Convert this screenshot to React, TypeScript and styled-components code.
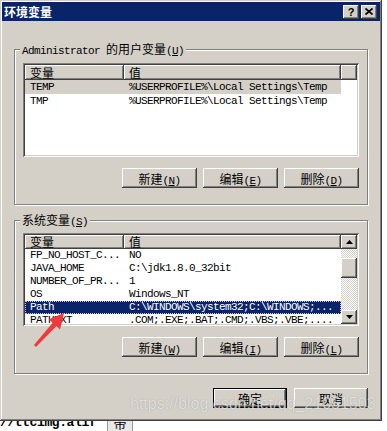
import React from "react";
import styled, { createGlobalStyle, css } from "styled-components";

const GlobalStyle = createGlobalStyle`
  body {
    margin: 0;
    background: #fff;
  }
  * {
    box-sizing: border-box;
  }
`;

const raised = css`
  background: #d4d0c8;
  box-shadow: inset -1px -1px #404040, inset 1px 1px #fff, inset -2px -2px #808080,
    inset 2px 2px #d4d0c8;
`;

const Page = styled.div`
  position: relative;
  width: 387px;
  height: 431px;
  overflow: hidden;
`;

const Window = styled.div`
  width: 382px;
  height: 421px;
  padding: 2px;
  background: #d4d0c8;
  box-shadow: inset -1px -1px #404040, inset 1px 1px #d4d0c8, inset -2px -2px #808080,
    inset 2px 2px #fff;
  display: flex;
  flex-direction: column;
  font-family: "Noto Sans CJK SC", sans-serif;
  font-size: 12px;
  color: #000;
`;

const TitleBar = styled.div`
  height: 19px;
  flex-shrink: 0;
  display: flex;
  align-items: center;
  padding: 0 3px 0 2px;
  background: #0a246a;
  color: #fff;
`;

const Title = styled.div`
  flex: 1;
  font-weight: bold;
  font-size: 12px;
  line-height: 19px;
`;

const CaptionButton = styled.div`
  ${raised};
  width: 16px;
  height: 14px;
  margin-left: 2px;
  display: flex;
  align-items: center;
  justify-content: center;
  font-family: "Liberation Sans", sans-serif;
  font-weight: bold;
  font-size: 11px;
  color: #000;
  line-height: 14px;
`;

const Content = styled.div`
  flex: 1;
  display: flex;
  flex-direction: column;
  padding: 21px 12px 0;
`;

const Group = styled.fieldset<{ $top: number; $padTop: number }>`
  margin: ${(p) => p.$top}px 0 0;
  padding: ${(p) => p.$padTop}px 8px 16px;
  min-width: 0;
  border: 1px solid #808080;
  box-shadow: 1px 1px 0 #fff, inset 1px 1px 0 #fff;
`;

const Legend = styled.legend`
  margin-left: -3px;
  padding: 0 2px;
  height: 14px;
  line-height: 14px;
  background: #d4d0c8;
  white-space: nowrap;
`;

const Mono = styled.span`
  font-family: "Liberation Mono", monospace;
  font-size: 11px;
  letter-spacing: -0.6px;
`;

const ListBox = styled.div<{ $h: number }>`
  height: ${(p) => p.$h}px;
  padding: 2px;
  background: #fff;
  box-shadow: inset 1px 1px #808080, inset -1px -1px #fff, inset 2px 2px #404040,
    inset -2px -2px #d4d0c8;
  display: flex;
  overflow: hidden;
`;

const ListMain = styled.div`
  flex: 1;
  display: flex;
  flex-direction: column;
  overflow: hidden;
`;

const HeaderRow = styled.div<{ $h: number }>`
  display: flex;
  height: ${(p) => p.$h}px;
  flex-shrink: 0;
`;

const HeaderCell = styled.div<{ $w?: number }>`
  ${raised};
  ${(p) => (p.$w ? `width: ${p.$w}px;` : "flex: 1;")}
  height: 100%;
  padding-left: 5px;
  display: flex;
  align-items: center;
  font-size: 12px;
  line-height: 12px;
`;

const Row = styled.div<{ $h: number; $sel?: "focus" | "blur" }>`
  display: flex;
  width: 316px;
  height: ${(p) => p.$h}px;
  line-height: ${(p) => p.$h}px;
  flex-shrink: 0;
  font-family: "Liberation Mono", monospace;
  font-size: 11px;
  letter-spacing: -0.6px;
  ${(p) =>
    p.$sel === "blur" &&
    css`
      background: #d4d0c8;
    `}
  ${(p) =>
    p.$sel === "focus" &&
    css`
      background: #0a246a;
      color: #fff;
      outline: 1px dotted #e8c860;
      outline-offset: -1px;
    `}
`;

const Cell = styled.div<{ $w: number }>`
  width: ${(p) => p.$w}px;
  padding-left: 5px;
  white-space: nowrap;
  overflow: hidden;
`;

const ScrollBar = styled.div`
  width: 16px;
  display: flex;
  flex-direction: column;
`;

const ScrollButton = styled.div`
  ${raised};
  height: 14px;
  flex-shrink: 0;
  display: flex;
  align-items: center;
  justify-content: center;
`;

const Track = styled.div`
  flex: 1;
  background-color: #d4d0c8;
  background-image: repeating-conic-gradient(#fff 0 25%, #d4d0c8 0 50%);
  background-size: 2px 2px;
`;

const Thumb = styled.div`
  ${raised};
  height: 20px;
  margin-top: 9px;
`;

const ButtonRow = styled.div<{ $top: number; $gap: number }>`
  display: flex;
  justify-content: flex-end;
  gap: ${(p) => p.$gap}px;
  margin-top: ${(p) => p.$top}px;
`;

const Button = styled.button<{ $default?: boolean; $w?: number }>`
  width: ${(p) => p.$w ?? 75}px;
  height: 20px;
  padding: 0;
  border: none;
  font-family: "Noto Sans CJK SC", sans-serif;
  font-size: 12px;
  color: #000;
  ${raised};
  ${(p) =>
    p.$default &&
    css`
      box-shadow: inset 0 0 0 1px #000, inset -2px -2px #404040, inset 2px 2px #fff,
        inset -3px -3px #808080;
    `}
`;

const Footer = styled.div`
  display: flex;
  justify-content: flex-end;
  gap: 7px;
  margin-top: 14px;
`;

const Strip = styled.div`
  height: 10px;
  display: flex;
  overflow: hidden;
  background: #fff;
  font-family: "Liberation Mono", monospace;
  font-weight: bold;
  font-size: 13px;
  line-height: 14px;
`;

const StripText = styled.div`
  width: 107px;
  margin-top: -5px;
  letter-spacing: -0.4px;
`;

const StripTag = styled.div`
  width: 26px;
  margin-top: -5px;
  background: #e8e8e8;
  border-left: 1px solid #999;
  border-right: 1px solid #999;
  text-align: center;
  font-family: "Noto Sans CJK SC", sans-serif;
  font-weight: normal;
`;

const Watermark = styled.div`
  position: absolute;
  left: 130px;
  top: 395px;
  font-family: "Liberation Sans", sans-serif;
  font-size: 16px;
  line-height: 18px;
  color: rgba(255, 255, 255, 0.72);
  text-shadow: 0 0 1px rgba(0, 0, 0, 0.35);
  white-space: nowrap;
  pointer-events: none;
`;

const Overlay = styled.svg`
  position: absolute;
  left: 0;
  top: 0;
  pointer-events: none;
`;

const Arrow = ({ up }: { up?: boolean }) => (
  <svg width="7" height="4" viewBox="0 0 7 4">
    <path d={up ? "M3.5 0 L7 4 L0 4 Z" : "M0 0 L7 0 L3.5 4 Z"} fill="#000" />
  </svg>
);

const Key = ({ k }: { k: string }) => (
  <Mono>
    (<u>{k}</u>)
  </Mono>
);

const userVars = [
  ["TEMP", "%USERPROFILE%\\Local Settings\\Temp"],
  ["TMP", "%USERPROFILE%\\Local Settings\\Temp"],
];

const sysVars = [
  ["FP_NO_HOST_C...", "NO"],
  ["JAVA_HOME", "C:\\jdk1.8.0_32bit"],
  ["NUMBER_OF_PR...", "1"],
  ["OS", "Windows_NT"],
  ["Path", "C:\\WINDOWS\\system32;C:\\WINDOWS;..."],
  ["PATHEXT", ".COM;.EXE;.BAT;.CMD;.VBS;.VBE;...."],
];

const App: React.FC = () => {
  return (
    <Page>
      <GlobalStyle />
      <Window>
        <TitleBar>
          <Title>环境变量</Title>
          <CaptionButton>?</CaptionButton>
          <CaptionButton>
            <svg width="8" height="7" viewBox="0 0 8 7">
              <path d="M0.5 0.5 L7.5 6.5 M7.5 0.5 L0.5 6.5" stroke="#000" strokeWidth="1.7" />
            </svg>
          </CaptionButton>
        </TitleBar>

        <Content>
          <Group $top={0} $padTop={7}>
            <Legend>
              <Mono>Administrator </Mono>的用户变量<Key k="U" />
            </Legend>
            <ListBox $h={94}>
              <ListMain>
                <HeaderRow $h={15}>
                  <HeaderCell $w={99}>变量</HeaderCell>
                  <HeaderCell $w={217}>值</HeaderCell>
                  <HeaderCell />
                </HeaderRow>
                {userVars.map(([name, value], i) => (
                  <Row key={name} $h={14} $sel={i === 0 ? "blur" : undefined}>
                    <Cell $w={99}>{name}</Cell>
                    <Cell $w={217}>{value}</Cell>
                  </Row>
                ))}
              </ListMain>
            </ListBox>
            <ButtonRow $top={11} $gap={6}>
              <Button>
                新建<Key k="N" />
              </Button>
              <Button>
                编辑<Key k="E" />
              </Button>
              <Button>
                删除<Key k="D" />
              </Button>
            </ButtonRow>
          </Group>

          <Group $top={8} $padTop={6}>
            <Legend>
              系统变量<Key k="S" />
            </Legend>
            <ListBox $h={93}>
              <ListMain>
                <HeaderRow $h={14}>
                  <HeaderCell $w={99}>变量</HeaderCell>
                  <HeaderCell $w={217}>值</HeaderCell>
                </HeaderRow>
                {sysVars.map(([name, value]) => (
                  <Row key={name} $h={13} $sel={name === "Path" ? "focus" : undefined}>
                    <Cell $w={99}>{name}</Cell>
                    <Cell $w={217}>{value}</Cell>
                  </Row>
                ))}
              </ListMain>
              <ScrollBar>
                <ScrollButton>
                  <Arrow up />
                </ScrollButton>
                <Track>
                  <Thumb />
                </Track>
                <ScrollButton>
                  <Arrow />
                </ScrollButton>
              </ScrollBar>
            </ListBox>
            <ButtonRow $top={11} $gap={6}>
              <Button>
                新建<Key k="W" />
              </Button>
              <Button>
                编辑<Key k="I" />
              </Button>
              <Button>
                删除<Key k="L" />
              </Button>
            </ButtonRow>
          </Group>

          <Footer>
            <Button $default $w={74}>
              确定
            </Button>
            <Button $w={74}>取消</Button>
          </Footer>
        </Content>
      </Window>

      <Strip>
        <StripText>//ttcimg.alif</StripText>
        <StripTag>带</StripTag>
      </Strip>

      <Watermark>https://blog.csdn.net/qq_21051503</Watermark>

      <Overlay width="387" height="431" viewBox="0 0 387 431">
        <polygon
          points="34,345 36,347 56.5,326.1 60,329.5 64,313 48.8,319.3 52.7,322.7"
          fill="#f03a3a"
        />
      </Overlay>
    </Page>
  );
};

export default App;
